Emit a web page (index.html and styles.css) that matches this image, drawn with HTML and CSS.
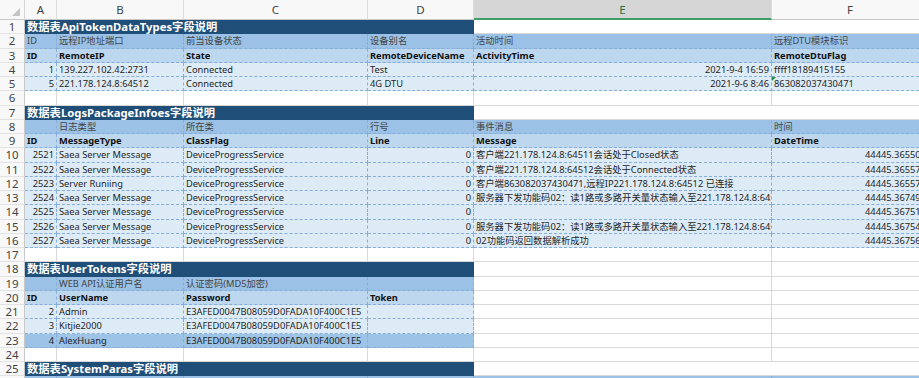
FILE: index.html
```html
<!DOCTYPE html>
<html lang="zh-CN">
<head>
<meta charset="utf-8">
<title>Sheet</title>
<link rel="stylesheet" href="styles.css">
</head>
<body>
<div class="sheet">
  <div class="corner"><svg class="tri" width="8" height="8" viewBox="0 0 8 8"><path d="M8 0V8H0Z" fill="#C4C4C4"/></svg></div>
  <div class="ch">A</div><div class="ch">B</div><div class="ch">C</div><div class="ch">D</div><div class="ch on">E</div><div class="ch">F</div>

  <div class="rh">1</div><div class="c t s4">数据表ApiTokenDataTypes字段说明</div><div class="c w s2"></div>
  <div class="rh">2</div><div class="c lb">ID</div><div class="c lb">远程IP地址端口</div><div class="c lb">前当设备状态</div><div class="c lb">设备别名</div><div class="c lb">活动时间</div><div class="c lb">远程DTU模块标识</div>
  <div class="rh">3</div><div class="c fd">ID</div><div class="c fd">RemoteIP</div><div class="c fd">State</div><div class="c fd">RemoteDeviceName</div><div class="c fd">ActivityTime</div><div class="c fd">RemoteDtuFlag</div>
  <div class="rh">4</div><div class="c d r">1</div><div class="c d">139.227.102.42:2731</div><div class="c d">Connected</div><div class="c d">Test</div><div class="c d r">2021-9-4 16:59</div><div class="c d">ffff18189415155</div>
  <div class="rh">5</div><div class="c d r">5</div><div class="c d">221.178.124.8:64512</div><div class="c d">Connected</div><div class="c d">4G DTU</div><div class="c d r">2021-9-6 8:46</div><div class="c d flag">863082037430471</div>
  <div class="rh">6</div><div class="c g"></div><div class="c g"></div><div class="c g"></div><div class="c g"></div><div class="c g"></div><div class="c g"></div>

  <div class="rh">7</div><div class="c t s4">数据表LogsPackageInfoes字段说明</div><div class="c w s2"></div>
  <div class="rh">8</div><div class="c lb"></div><div class="c lb">日志类型</div><div class="c lb">所在类</div><div class="c lb">行号</div><div class="c lb">事件消息</div><div class="c lb">时间</div>
  <div class="rh">9</div><div class="c fd">ID</div><div class="c fd">MessageType</div><div class="c fd">ClassFlag</div><div class="c fd">Line</div><div class="c fd">Message</div><div class="c fd">DateTime</div>
  <div class="rh">10</div><div class="c d r">2521</div><div class="c d">Saea Server Message</div><div class="c d">DeviceProgressService</div><div class="c d r">0</div><div class="c d">客户端221.178.124.8:64511会话处于Closed状态</div><div class="c d r">44445.365509</div>
  <div class="rh">11</div><div class="c d r">2522</div><div class="c d">Saea Server Message</div><div class="c d">DeviceProgressService</div><div class="c d r">0</div><div class="c d">客户端221.178.124.8:64512会话处于Connected状态</div><div class="c d r">44445.365572</div>
  <div class="rh">12</div><div class="c d r">2523</div><div class="c d">Server Runiing</div><div class="c d">DeviceProgressService</div><div class="c d r">0</div><div class="c d">客户端863082037430471,远程IP221.178.124.8:64512 已连接</div><div class="c d r">44445.365578</div>
  <div class="rh">13</div><div class="c d r">2524</div><div class="c d">Saea Server Message</div><div class="c d">DeviceProgressService</div><div class="c d r">0</div><div class="c d">服务器下发功能码02：读1路或多路开关量状态输入至221.178.124.8:64512</div><div class="c d r">44445.367495</div>
  <div class="rh">14</div><div class="c d r">2525</div><div class="c d">Saea Server Message</div><div class="c d">DeviceProgressService</div><div class="c d r">0</div><div class="c d"></div><div class="c d r">44445.367512</div>
  <div class="rh">15</div><div class="c d r">2526</div><div class="c d">Saea Server Message</div><div class="c d">DeviceProgressService</div><div class="c d r">0</div><div class="c d">服务器下发功能码02：读1路或多路开关量状态输入至221.178.124.8:64512</div><div class="c d r">44445.367546</div>
  <div class="rh">16</div><div class="c d r">2527</div><div class="c d">Saea Server Message</div><div class="c d">DeviceProgressService</div><div class="c d r">0</div><div class="c d">02功能码返回数据解析成功</div><div class="c d r">44445.367569</div>
  <div class="rh">17</div><div class="c g"></div><div class="c g"></div><div class="c g"></div><div class="c g"></div><div class="c g"></div><div class="c g"></div>

  <div class="rh">18</div><div class="c t s4">数据表UserTokens字段说明</div><div class="c g"></div><div class="c g"></div>
  <div class="rh">19</div><div class="c lb"></div><div class="c lb">WEB API认证用户名</div><div class="c lb">认证密码(MD5加密)</div><div class="c lb"></div><div class="c g"></div><div class="c g"></div>
  <div class="rh">20</div><div class="c fd">ID</div><div class="c fd">UserName</div><div class="c fd">Password</div><div class="c fd">Token</div><div class="c g"></div><div class="c g"></div>
  <div class="rh">21</div><div class="c d r">2</div><div class="c d">Admin</div><div class="c d">E3AFED0047B08059D0FADA10F400C1E5</div><div class="c d"></div><div class="c g"></div><div class="c g"></div>
  <div class="rh">22</div><div class="c d r">3</div><div class="c d">Kitjie2000</div><div class="c d">E3AFED0047B08059D0FADA10F400C1E5</div><div class="c d"></div><div class="c g"></div><div class="c g"></div>
  <div class="rh">23</div><div class="c hl r">4</div><div class="c hl">AlexHuang</div><div class="c hl">E3AFED0047B08059D0FADA10F400C1E5</div><div class="c hl"></div><div class="c g"></div><div class="c g"></div>
  <div class="rh">24</div><div class="c g"></div><div class="c g"></div><div class="c g"></div><div class="c g"></div><div class="c g"></div><div class="c g"></div>

  <div class="rh">25</div><div class="c t s4">数据表SystemParas字段说明</div><div class="c w s2"></div>
  <div class="rh">26</div><div class="c lb"></div><div class="c lb"></div><div class="c lb"></div><div class="c lb"></div><div class="c lb"></div><div class="c lb"></div>
</div>
</body>
</html>
```

FILE: styles.css
```css
html, body {
  margin: 0;
  padding: 0;
  width: 919px;
  height: 378px;
  overflow: hidden;
  background: #ffffff;
}

.sheet {
  display: grid;
  grid-template-columns: 25px 32px 127px 184px 106px 298px 157px;
  grid-template-rows: 20px repeat(26, 14.25px);
  width: 929px;
  font-family: "Noto Sans", "Noto Sans CJK SC", sans-serif;
  font-size: 9.3px;
  color: #1f1f1f;
}

.corner {
  display: flex;
  align-items: flex-end;
  justify-content: flex-end;
  padding: 0 4px 3px 0;
  box-sizing: border-box;
  background: #f8f8f8;
  border-right: 1px solid #d4d4d4;
  border-bottom: 1px solid #c8c8c8;
}

.ch {
  box-sizing: border-box;
  display: flex;
  align-items: center;
  justify-content: center;
  font-size: 11.5px;
  color: #444444;
  background: #f8f8f8;
  border-right: 1px solid #dcdcdc;
  border-bottom: 1px solid #c8c8c8;
}

.ch.on {
  background: #d6d6d6;
  color: #217346;
  border-bottom: 2px solid #3f9f6b;
}

.rh {
  box-sizing: border-box;
  display: flex;
  align-items: center;
  justify-content: center;
  font-size: 11.5px;
  color: #444444;
  background: #f8f8f8;
  border-right: 1px solid #c8c8c8;
  border-bottom: 1px solid #e2e2e2;
}

.c {
  box-sizing: border-box;
  padding: 0 2px;
  line-height: 13.5px;
  white-space: nowrap;
  overflow: hidden;
}

.r {
  text-align: right;
}

.s4 {
  grid-column: span 4;
}

.s2 {
  grid-column: span 2;
}

.t {
  background: #1f4e78;
  color: #ffffff;
  font-weight: 700;
  font-size: 11.3px;
  line-height: 14px;
}

.w {
  background: #ffffff;
  border-bottom: 1px solid #d9d9d9;
}

.g {
  background: #ffffff;
  border-right: 1px solid #d9d9d9;
  border-bottom: 1px solid #d9d9d9;
}

.lb, .fd, .d, .hl {
  border-right: 1px dashed #86aed8;
  border-bottom: 1px dashed #86aed8;
}

.lb {
  background: #9bc2e6;
  color: #444444;
}

.fd {
  background: #bdd7ee;
  font-weight: 700;
  color: #111111;
}

.d {
  background: #ddebf7;
}

.hl {
  background: #9dc3e6;
}

.flag {
  position: relative;
}

.flag::before {
  content: "";
  position: absolute;
  left: 0;
  top: 0;
  border-top: 4px solid #1e8e3e;
  border-right: 4px solid transparent;
}
```
